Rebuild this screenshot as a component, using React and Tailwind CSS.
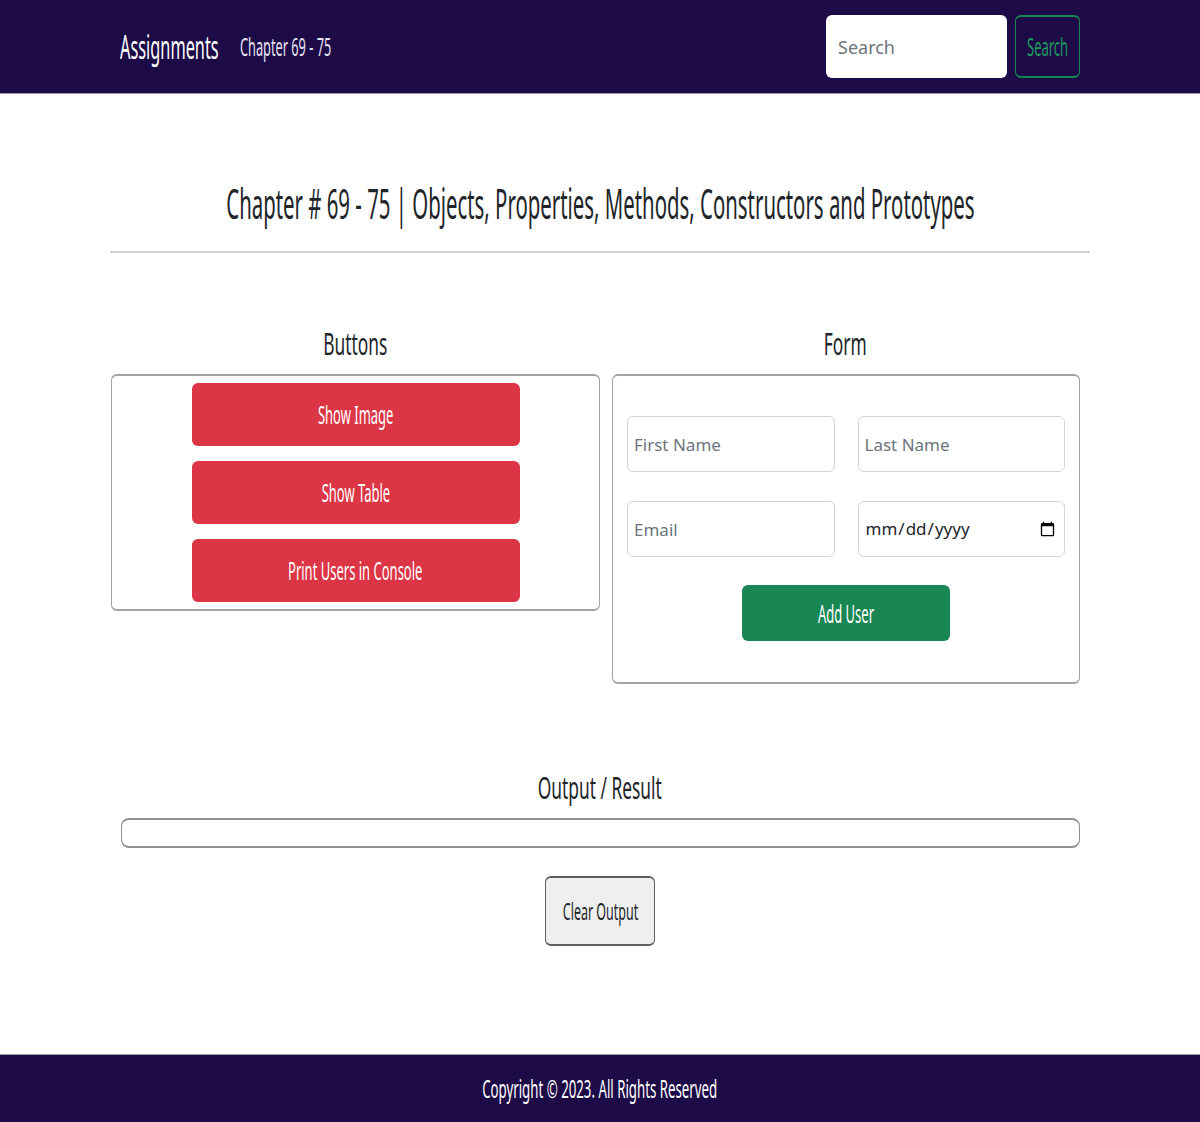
import React, { useState } from 'react';

// the reference is stretched tall, so text is drawn large and squeezed sideways
const txt = "inline-block whitespace-nowrap scale-x-[0.52]";
const txtFoot = "inline-block whitespace-nowrap scale-x-[0.53]";
const txtHead = "inline-block whitespace-nowrap scale-x-[0.56]";
const txtTitle = "inline-block whitespace-nowrap scale-x-[0.485]";
const txtLeft = "inline-block whitespace-nowrap origin-left scale-x-[0.51]";

const Navbar = () => (
  <nav className="h-[94px] bg-[#1d0b47] border-b border-[#9a9a9a]">
    <div className="w-[960px] h-full ml-[120px] flex items-center">
      <div className="w-[120px] text-[32px] leading-none text-white">
        <span className={txtLeft}>Assignments</span>
      </div>
      <div className="text-[25px] leading-none text-[#e6e3f0]">
        <span className={txtLeft}>Chapter 69 - 75</span>
      </div>
      <div className="ml-auto flex items-center gap-2">
        <input
          type="text"
          placeholder="Search"
          className="w-[181px] h-[63px] rounded-md bg-white px-3 text-[18px] text-gray-700 placeholder:text-[#6c757d] outline-none"
        />
        <button className="w-[65px] h-[63px] rounded-md border-x border-y-2 border-[#198754] text-[#1e9a5e] text-[25px] leading-none flex items-center justify-center">
          <span className={txt}>Search</span>
        </button>
      </div>
    </div>
  </nav>
);

const RedButton = ({ label }) => (
  <button className="w-[328px] h-[63px] mx-auto rounded-md bg-[#dc3545] text-white text-[25px] leading-none flex items-center justify-center">
    <span className={txt}>{label}</span>
  </button>
);

const Field = ({ type = "text", placeholder }) => (
  <input
    type={type}
    placeholder={placeholder}
    className="w-full h-full rounded-md border border-[#ced4da] bg-white px-[6px] text-[17px] text-[#212529] placeholder:text-[#6c757d] outline-none"
  />
);

const Heading = ({ children }) => (
  <div className="h-[46px] flex items-center justify-center text-[31px] leading-none text-[#212529]">
    <span className={txtHead}>{children}</span>
  </div>
);

export default function App() {
  const [output, setOutput] = useState("");

  return (
    <div className="min-h-screen flex flex-col bg-white" style={{ fontFamily: '"Noto Sans", "Open Sans", sans-serif' }}>
      <Navbar />

      <main className="flex-1 w-[980px] mx-auto">
        {/* Title */}
        <div className="mt-[66px] h-[85px] flex items-center justify-center text-[42px] leading-none text-[#212529]">
          <span className={txtTitle}>Chapter # 69 - 75 | Objects, Properties, Methods, Constructors and Prototypes</span>
        </div>
        <div className="mt-[6px] h-[2px] bg-[#cfcfcf]" />

        {/* Buttons + Form */}
        <div className="mt-[67px] grid grid-cols-2">
          <div>
            <Heading>Buttons</Heading>
            <div className="mt-[8px] ml-px border-x border-y-2 border-[#a3a3a3] rounded-md py-[7px] flex flex-col gap-[15px]">
              <RedButton label="Show Image" />
              <RedButton label="Show Table" />
              <RedButton label="Print Users in Console" />
            </div>
          </div>

          <div>
            <Heading>Form</Heading>
            <div className="mt-[8px] ml-[12px] mr-[10px] border-x border-y-2 border-[#a3a3a3] rounded-md pt-[40px] pb-[41px] px-[14px]">
              <div className="grid grid-cols-2 gap-x-[23px] gap-y-[29px]">
                <div className="h-[56px]"><Field placeholder="First Name" /></div>
                <div className="h-[56px]"><Field placeholder="Last Name" /></div>
                <div className="h-[56px]"><Field placeholder="Email" /></div>
                <div className="h-[56px]"><Field type="date" /></div>
              </div>
              <button className="mt-[28px] mx-auto w-[208px] h-[56px] rounded-md bg-[#198754] text-white text-[25px] leading-none flex items-center justify-center">
                <span className={txt}>Add User</span>
              </button>
            </div>
          </div>
        </div>

        {/* Output */}
        <div className="mt-[80px]">
          <Heading>Output / Result</Heading>
        </div>
        <div className="mt-[8px] ml-[11px] mr-[10px] h-[30px] border-x border-y-2 border-[#8f8f8f] rounded-lg px-3 text-[16px]">
          {output}
        </div>
        <div className="mt-[28px] flex justify-center">
          <button
            onClick={() => setOutput("")}
            className="w-[110px] h-[70px] rounded-md bg-[#efefef] border-x border-y-2 border-[#5f5f5f] text-[24px] leading-none text-[#212529] flex items-center justify-center"
          >
            <span className={txt}>Clear Output</span>
          </button>
        </div>
      </main>

      <footer className="h-[68px] bg-[#1d0b47] border-t border-[#9a9a9a] flex items-center justify-center text-[25px] leading-none text-white">
        <span className={txtFoot}>Copyright © 2023. All Rights Reserved</span>
      </footer>
    </div>
  );
}
